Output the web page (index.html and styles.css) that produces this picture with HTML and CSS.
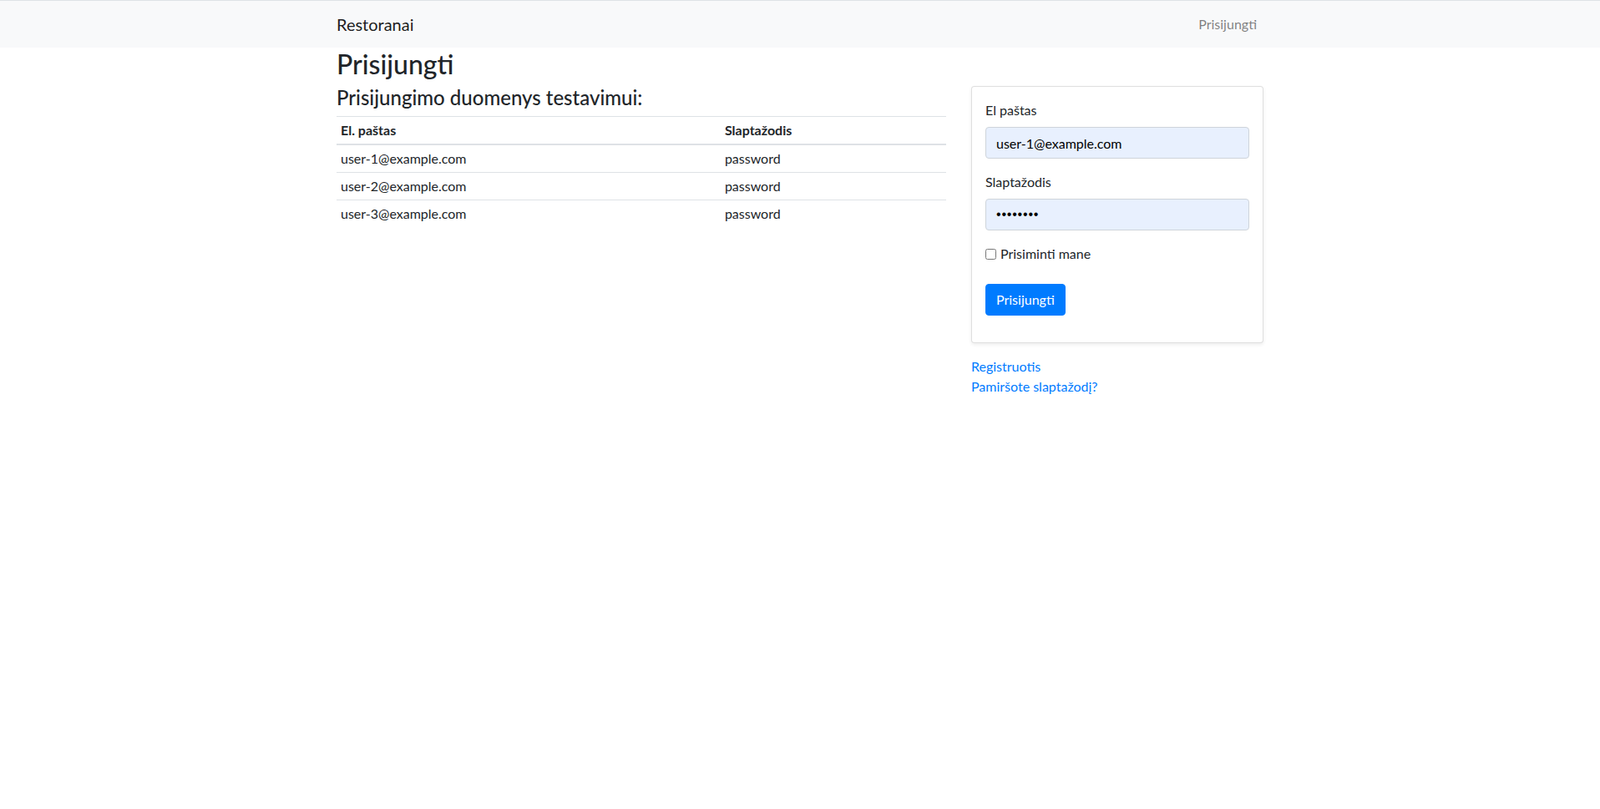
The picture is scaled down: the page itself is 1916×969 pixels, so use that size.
FILE: index.html
```html
<!DOCTYPE html>
<html lang="lt">
<head>
<meta charset="utf-8">
<title>Prisijungti</title>
<link rel="stylesheet" href="styles.css">
</head>
<body>
<nav class="navbar">
  <div class="container nav-inner">
    <a class="brand" href="#">Restoranai</a>
    <a class="nav-link" href="#">Prisijungti</a>
  </div>
</nav>
<main class="container">
  <h1 class="page-title">Prisijungti</h1>
  <div class="row">
    <div class="col-main">
      <h4 class="sub-title">Prisijungimo duomenys testavimui:</h4>
      <table class="table">
        <thead>
          <tr><th class="col-email">El. paštas</th><th>Slaptažodis</th></tr>
        </thead>
        <tbody>
          <tr><td>user-1@example.com</td><td>password</td></tr>
          <tr><td>user-2@example.com</td><td>password</td></tr>
          <tr><td>user-3@example.com</td><td>password</td></tr>
        </tbody>
      </table>
    </div>
    <div class="col-side">
      <div class="card">
        <form class="card-body">
          <div class="form-group">
            <label class="label" for="email">El paštas</label>
            <input class="form-control" id="email" type="text" value="user-1@example.com">
          </div>
          <div class="form-group">
            <label class="label" for="pass">Slaptažodis</label>
            <input class="form-control password" id="pass" type="password" value="password">
          </div>
          <div class="form-check">
            <input class="check" id="remember" type="checkbox">
            <label for="remember">Prisiminti mane</label>
          </div>
          <div class="form-group">
            <button class="btn" type="button">Prisijungti</button>
          </div>
        </form>
      </div>
      <div class="links">
        <a href="#">Registruotis</a>
        <a href="#">Pamiršote slaptažodį?</a>
      </div>
    </div>
  </div>
</main>
</body>
</html>
```
FILE: styles.css
```css
* { box-sizing: border-box; }
html, body { margin: 0; }
body {
  font-family: Lato, "Liberation Sans", sans-serif;
  font-size: 16px;
  line-height: 1.5;
  color: #212529;
  background: #fff;
}
a { text-decoration: none; }
.container {
  width: 1140px;
  margin: 0 auto;
  padding: 0 15px;
}
.navbar {
  border-top: 1px solid #dee2e6;
  background: #f8f9fa;
  padding: 8px 0;
}
.nav-inner {
  display: flex;
  justify-content: space-between;
  align-items: center;
}
.brand {
  font-size: 20px;
  line-height: 30px;
  padding: 5px 0;
  color: rgba(0,0,0,.9);
}
.nav-link {
  color: rgba(0,0,0,.5);
  padding: 8px;
  line-height: 24px;
}
.page-title {
  font-size: 32px;
  font-weight: 500;
  line-height: 1.2;
  margin: 1px 0 7px;
}
.row {
  display: flex;
  margin: 0 -15px;
}
.col-main {
  width: 66.6667%;
  padding: 0 15px;
}
.col-side {
  width: 33.3333%;
  padding: 0 15px;
}
.sub-title {
  font-size: 24px;
  font-weight: 500;
  line-height: 1.2;
  margin: 0 0 7px;
}
.table {
  width: 100%;
  border-collapse: collapse;
  color: #212529;
}
.table th, .table td {
  padding: 4px 5px;
  text-align: left;
  vertical-align: top;
  border-top: 1px solid #dee2e6;
}
.table thead th {
  border-bottom: 2px solid #dee2e6;
  font-weight: 700;
}
.col-email { width: 63%; }
.card {
  border: 1px solid rgba(0,0,0,.125);
  border-radius: 4px;
  box-shadow: 0 2px 4px rgba(0,0,0,.075);
  background: #fff;
}
.card-body {
  padding: 16px;
  margin: 0;
}
.form-group { margin-bottom: 16px; }
.label {
  display: block;
  margin-bottom: 8px;
}
.form-control {
  display: block;
  width: 100%;
  height: 38px;
  padding: 6px 12px;
  font-family: Lato, "Liberation Sans", sans-serif;
  font-size: 16px;
  line-height: 24px;
  color: #000;
  background: #e8f0fe;
  border: 1px solid #ced4da;
  border-radius: 4px;
  outline: none;
}
.form-control.password {
  font-family: "Liberation Sans", sans-serif;
  letter-spacing: 0.8px;
}
.form-check {
  display: flex;
  align-items: center;
  margin-bottom: 24px;
  line-height: 24px;
}
.check {
  width: 13px;
  height: 13px;
  margin: 0 5px 0 0;
}
.btn {
  font-family: Lato, "Liberation Sans", sans-serif;
  font-size: 16px;
  line-height: 24px;
  padding: 6px 12px;
  color: #fff;
  background: #007bff;
  border: 1px solid #007bff;
  border-radius: 4px;
}
.links {
  margin-top: 16px;
  display: flex;
  flex-direction: column;
}
.links a { color: #007bff; }
```
